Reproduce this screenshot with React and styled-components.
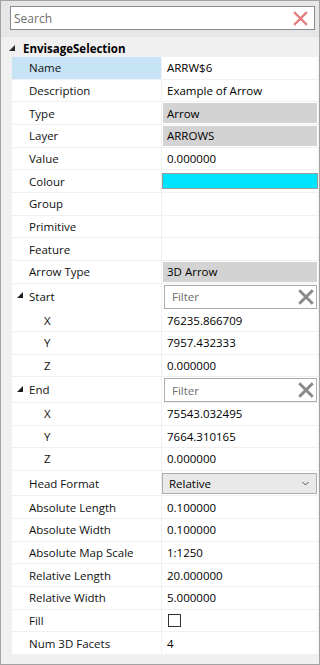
import React from "react";
import styled, { createGlobalStyle } from "styled-components";

const GlobalStyle = createGlobalStyle`
  html, body {
    margin: 0;
    padding: 0;
    background: #ffffff;
  }
  body {
    font-family: "Open Sans", "Noto Sans", "Liberation Sans", sans-serif;
    font-size: 11.5px;
    color: #000;
  }
`;

const properties = [
  { label: "Name", value: "ARRW$6", selected: true },
  { label: "Description", value: "Example of Arrow" },
  { label: "Type", value: "Arrow", kind: "readonly" },
  { label: "Layer", value: "ARROWS", kind: "readonly" },
  { label: "Value", value: "0.000000" },
  { label: "Colour", kind: "colour", value: "#00e5ff" },
  { label: "Group", value: "" },
  { label: "Primitive", value: "" },
  { label: "Feature", value: "" },
  { label: "Arrow Type", value: "3D Arrow", kind: "readonly" },
  {
    label: "Start",
    kind: "filter",
    children: [
      { label: "X", value: "76235.866709" },
      { label: "Y", value: "7957.432333" },
      { label: "Z", value: "0.000000" },
    ],
  },
  {
    label: "End",
    kind: "filter",
    children: [
      { label: "X", value: "75543.032495" },
      { label: "Y", value: "7664.310165" },
      { label: "Z", value: "0.000000" },
    ],
  },
  { label: "Head Format", value: "Relative", kind: "combo" },
  { label: "Absolute Length", value: "0.100000" },
  { label: "Absolute Width", value: "0.100000" },
  { label: "Absolute Map Scale", value: "1:1250" },
  { label: "Relative Length", value: "20.000000" },
  { label: "Relative Width", value: "5.000000" },
  { label: "Fill", kind: "check" },
  { label: "Num 3D Facets", value: "4" },
];

const Expander = ({ color = "#1e1e1e" }) => (
  <svg width="6" height="6" viewBox="0 0 6 6">
    <path d="M6 0 L6 6 L0 6 Z" fill={color} />
  </svg>
);

const Cross = ({ color, size, stroke }) => (
  <svg width={size} height={size} viewBox="0 0 16 16">
    <path
      d="M2 2 L14 14 M14 2 L2 14"
      stroke={color}
      strokeWidth={stroke}
      strokeLinecap="butt"
      fill="none"
    />
  </svg>
);

const Chevron = () => (
  <svg width="7" height="5" viewBox="0 0 7 5">
    <path d="M0.5 1 L3.5 4 L6.5 1" stroke="#555" strokeWidth="1" fill="none" />
  </svg>
);

const renderValue = (item) => {
  switch (item.kind) {
    case "readonly":
      return <ReadOnly>{item.value}</ReadOnly>;
    case "colour":
      return <Swatch $color={item.value} />;
    case "filter":
      return (
        <FilterBox>
          <FilterText>Filter</FilterText>
          <Cross color="#8a8a8a" size={18} stroke={2.6} />
        </FilterBox>
      );
    case "combo":
      return (
        <Combo>
          <span>{item.value}</span>
          <Chevron />
        </Combo>
      );
    case "check":
      return (
        <ValueCell>
          <CheckBox />
        </ValueCell>
      );
    default:
      return <ValueCell>{item.value}</ValueCell>;
  }
};

const PropertyRow = ({ item, level = 0 }) => (
  <>
    <Row $tall={item.kind === "filter" || item.kind === "combo"}>
      <LabelCell $level={level} $selected={item.selected}>
        {item.children && (
          <ExpanderSlot>
            <Expander />
          </ExpanderSlot>
        )}
        {item.label}
      </LabelCell>
      {renderValue(item)}
    </Row>
    {item.children &&
      item.children.map((child) => (
        <PropertyRow key={item.label + child.label} item={child} level={1} />
      ))}
  </>
);

const App = () => {
  return (
    <>
      <GlobalStyle />
      <Frame>
        <Toolbar>
          <SearchBox>
            <SearchText>Search</SearchText>
            <Cross color="#e57b7b" size={17} stroke={2} />
          </SearchBox>
        </Toolbar>
        <Grid>
          <Category>
            <CategoryExpander>
              <Expander color="#2b2b2b" />
            </CategoryExpander>
            EnvisageSelection
          </Category>
          {properties.map((item) => (
            <PropertyRow key={item.label} item={item} />
          ))}
        </Grid>
        <Footer />
      </Frame>
    </>
  );
};

export default App;

const Frame = styled.div`
  box-sizing: border-box;
  width: 320px;
  height: 665px;
  border: 1px solid #a3a3a3;
  background: #f0f0f0;
  display: flex;
  flex-direction: column;
  overflow: hidden;
`;

const Toolbar = styled.div`
  padding: 5px 4px 7px 9px;
  background: #e6e6e6;
`;

const SearchBox = styled.div`
  box-sizing: border-box;
  height: 24px;
  display: flex;
  align-items: center;
  justify-content: space-between;
  padding: 0 5px 0 3px;
  background: #fff;
  border: 1px solid #8a8a8a;
`;

const SearchText = styled.span`
  color: #6d6d6d;
  font-size: 12px;
`;

const Grid = styled.div`
  display: flex;
  flex-direction: column;
`;

const Category = styled.div`
  box-sizing: border-box;
  height: 20px;
  display: flex;
  align-items: center;
  padding: 2px 0 0 8px;
  font-weight: 700;
  font-size: 11.5px;
  color: #000;
`;

const CategoryExpander = styled.span`
  display: flex;
  width: 14px;
  margin-top: -1px;
`;

const Row = styled.div`
  box-sizing: border-box;
  height: ${(p) => (p.$tall ? "25.67px" : "22.67px")};
  margin: 0 1px 0 11px;
  display: grid;
  grid-template-columns: 150px 1fr;
  background: #fff;
  border-bottom: 1px solid #f0f0f0;
`;

const LabelCell = styled.div`
  display: flex;
  align-items: center;
  padding-left: ${(p) => (p.$level ? 32 : 17)}px;
  border-right: 1px solid #f0f0f0;
  background: ${(p) => (p.$selected ? "#c7e3f6" : "#fff")};
  color: #111;
  white-space: nowrap;
  position: relative;
`;

const ExpanderSlot = styled.span`
  position: absolute;
  left: 5px;
  top: 50%;
  margin-top: -4px;
  display: flex;
`;

const ValueCell = styled.div`
  display: flex;
  align-items: center;
  padding-left: 5px;
  white-space: nowrap;
`;

const ReadOnly = styled.div`
  display: flex;
  align-items: center;
  margin: 1px;
  padding-left: 4px;
  background: #d3d3d3;
`;

const Swatch = styled.div`
  margin: 3px 0;
  background: ${(p) => p.$color};
  border: 1px solid #9a9a9a;
`;

const FilterBox = styled.div`
  box-sizing: border-box;
  margin: 1px 1px 0 2px;
  height: 24px;
  display: flex;
  align-items: center;
  justify-content: space-between;
  padding: 0 1px 0 7px;
  background: #fff;
  border: 1px solid #acacac;
`;

const FilterText = styled.span`
  color: #6d6d6d;
`;

const Combo = styled.div`
  box-sizing: border-box;
  margin: 2px 1px 1px 0;
  display: flex;
  align-items: center;
  justify-content: space-between;
  padding: 0 7px 0 6px;
  background: #e9e9e9;
  border: 1px solid #acacac;
`;

const CheckBox = styled.span`
  box-sizing: border-box;
  width: 13px;
  height: 13px;
  margin-left: 1px;
  border: 1px solid #333;
  background: #fff;
`;

const Footer = styled.div`
  flex: 1;
  background: #f0f0f0;
`;
